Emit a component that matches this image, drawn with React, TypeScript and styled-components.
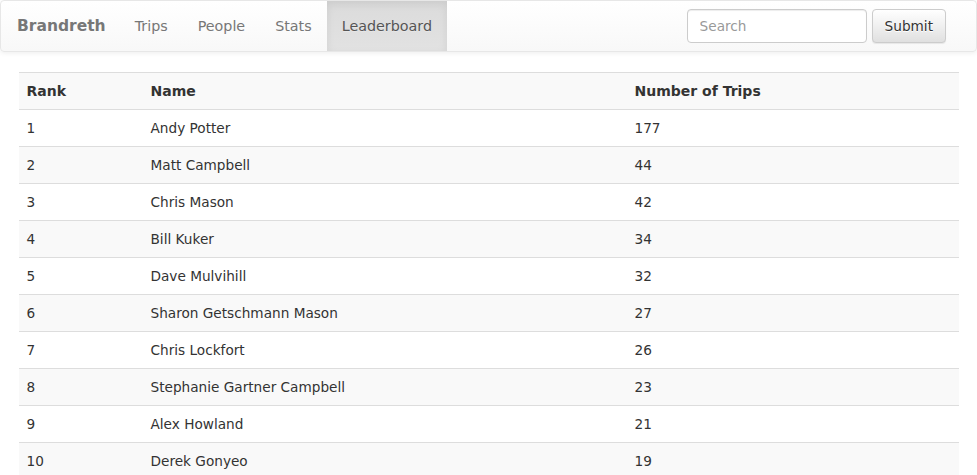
import { createGlobalStyle } from 'styled-components'
import styled from 'styled-components'

const GlobalStyle = createGlobalStyle`
  * { box-sizing: border-box; }
  body {
    margin: 0;
    font-family: "DejaVu Sans", Verdana, sans-serif;
    font-size: 13.65px;
    line-height: 20px;
    color: #333;
    background: #fff;
  }
`

const leaders = [
  { rank: 1, name: 'Andy Potter', trips: 177 },
  { rank: 2, name: 'Matt Campbell', trips: 44 },
  { rank: 3, name: 'Chris Mason', trips: 42 },
  { rank: 4, name: 'Bill Kuker', trips: 34 },
  { rank: 5, name: 'Dave Mulvihill', trips: 32 },
  { rank: 6, name: 'Sharon Getschmann Mason', trips: 27 },
  { rank: 7, name: 'Chris Lockfort', trips: 26 },
  { rank: 8, name: 'Stephanie Gartner Campbell', trips: 23 },
  { rank: 9, name: 'Alex Howland', trips: 21 },
  { rank: 10, name: 'Derek Gonyeo', trips: 19 },
]

const Navbar = styled.nav`
  display: flex;
  align-items: stretch;
  height: 52px;
  margin-bottom: 20px;
  border: 1px solid #e7e7e7;
  border-radius: 4px;
  background-image: linear-gradient(to bottom, #fff 0, #f8f8f8 100%);
  box-shadow: inset 0 1px 0 rgba(255, 255, 255, 0.15), 0 1px 5px rgba(0, 0, 0, 0.075);
`

const Brand = styled.a`
  padding: 15px 14px 15px 16px;
  font-size: 15.5px;
  line-height: 20px;
  font-weight: bold;
  color: #777;
  text-decoration: none;
  text-shadow: 0 1px 0 rgba(255, 255, 255, 0.25);
`

const NavList = styled.ul`
  display: flex;
  list-style: none;
  margin: 0;
  padding: 0;
`

const NavLink = styled.a<{ $active?: boolean }>`
  display: block;
  padding: 15px 15px;
  height: 50px;
  font-size: 14.3px;
  color: ${(p) => (p.$active ? '#555' : '#777')};
  text-decoration: none;
  text-shadow: 0 1px 0 rgba(255, 255, 255, 0.25);
  background-image: ${(p) =>
    p.$active ? 'linear-gradient(to bottom, #dbdbdb 0, #e2e2e2 100%)' : 'none'};
  box-shadow: ${(p) => (p.$active ? 'inset 0 3px 9px rgba(0, 0, 0, 0.075)' : 'none')};
`

const SearchForm = styled.form`
  display: flex;
  align-items: center;
  gap: 5px;
  margin-left: auto;
  padding: 0 30px 0 15px;
`

const SearchInput = styled.input`
  width: 180px;
  height: 34px;
  padding: 6px 12px;
  font-family: inherit;
  font-size: 13.65px;
  color: #555;
  border: 1px solid #ccc;
  border-radius: 4px;
  background: #fff;
  box-shadow: inset 0 1px 1px rgba(0, 0, 0, 0.075);
  &::placeholder { color: #999; }
`

const SubmitButton = styled.button`
  height: 34px;
  padding: 6px 12px;
  font-family: inherit;
  font-size: 13.65px;
  color: #333;
  border: 1px solid #ccc;
  border-radius: 4px;
  background-image: linear-gradient(to bottom, #fff 0, #e0e0e0 100%);
  text-shadow: 0 1px 0 #fff;
  box-shadow: inset 0 1px 0 rgba(255, 255, 255, 0.15), 0 1px 1px rgba(0, 0, 0, 0.075);
`

const Container = styled.div`
  width: 970px;
  margin: 0 auto;
  padding: 0 15px;
`

const Table = styled.table`
  width: 100%;
  border-collapse: collapse;
  border-spacing: 0;
`

const Row = styled.tr`
  &:nth-of-type(odd) { background-color: #f9f9f9; }
`

const HeadCell = styled.th<{ $w?: number }>`
  width: ${(p) => (p.$w ? `${p.$w}px` : 'auto')};
  padding: 8px;
  text-align: left;
  font-size: 14px;
  font-weight: bold;
  line-height: 20px;
  border-top: 1px solid #ddd;
`

const Cell = styled.td`
  padding: 8px;
  line-height: 20px;
  border-top: 1px solid #ddd;
`

export default function App() {
  return (
    <>
      <GlobalStyle />
      <Navbar>
        <Brand href="#">Brandreth</Brand>
        <NavList>
          <li><NavLink href="#">Trips</NavLink></li>
          <li><NavLink href="#">People</NavLink></li>
          <li><NavLink href="#">Stats</NavLink></li>
          <li><NavLink href="#" $active>Leaderboard</NavLink></li>
        </NavList>
        <SearchForm onSubmit={(e) => e.preventDefault()}>
          <SearchInput placeholder="Search" />
          <SubmitButton type="submit">Submit</SubmitButton>
        </SearchForm>
      </Navbar>
      <Container>
        <Table>
          <tbody>
            <Row>
              <HeadCell $w={124}>Rank</HeadCell>
              <HeadCell $w={484}>Name</HeadCell>
              <HeadCell>Number of Trips</HeadCell>
            </Row>
            {leaders.map((l) => (
              <Row key={l.rank}>
                <Cell>{l.rank}</Cell>
                <Cell>{l.name}</Cell>
                <Cell>{l.trips}</Cell>
              </Row>
            ))}
          </tbody>
        </Table>
      </Container>
    </>
  )
}
